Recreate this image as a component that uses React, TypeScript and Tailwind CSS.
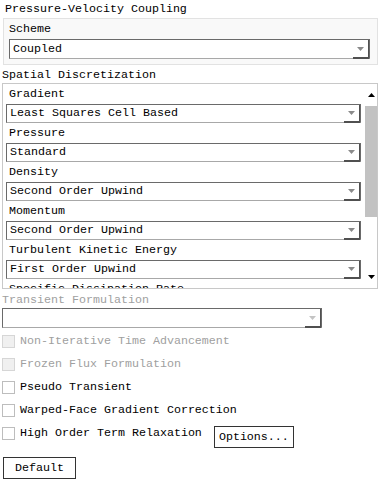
import React from "react";

const font = { fontFamily: '"Liberation Mono", "DejaVu Sans Mono", monospace' };

function Arrow({ color }: { color: string }) {
  return (
    <svg width="7" height="4" viewBox="0 0 7 4" aria-hidden>
      <path d="M0 0H7L3.5 4Z" fill={color} />
    </svg>
  );
}

function Combo({
  value,
  disabled,
  short,
  className = "",
}: {
  value: string;
  disabled?: boolean;
  short?: boolean;
  className?: string;
}) {
  return (
    <div
      className={`flex ${short ? "h-[19px]" : "h-[20px]"} border border-[#6a6a6a] border-b-[#a8a8a8] bg-white ${className}`}
    >
      <span className={`flex-1 overflow-hidden whitespace-nowrap pl-[3px] ${short ? "leading-[17px]" : "leading-[18px]"}`}>
        {value}
      </span>
      <span className="-mb-px flex w-[16px] items-center justify-center border-b-2 border-r border-b-[#505050] border-r-[#505050]">
        <Arrow color={disabled ? "#c4c4c4" : "#8a8a8a"} />
      </span>
    </div>
  );
}

function Field({ label, value }: { label: string; value: string }) {
  return (
    <div>
      <div className="h-[20px] pl-[3px] leading-[21px]">{label}</div>
      <Combo value={value} short />
    </div>
  );
}

function Check({ label, disabled }: { label: string; disabled?: boolean }) {
  return (
    <div className={`flex h-[23px] items-center gap-[5px] pl-[2px] ${disabled ? "text-[#a0a0a0]" : ""}`}>
      <span
        className={`h-[13px] w-[13px] border ${disabled ? "border-[#d6d6d6] bg-[#f0f0f0]" : "border-[#bdbdbd] bg-white"}`}
      />
      <span>{label}</span>
    </div>
  );
}

const fields = [
  ["Gradient", "Least Squares Cell Based"],
  ["Pressure", "Standard"],
  ["Density", "Second Order Upwind"],
  ["Momentum", "Second Order Upwind"],
  ["Turbulent Kinetic Energy", "First Order Upwind"],
  ["Specific Dissipation Rate", "Second Order Upwind"],
];

export default function App() {
  return (
    <div className="h-[483px] w-[384px] overflow-hidden bg-white text-[11.67px] text-black" style={font}>
      <div className="h-[18px] pl-[5px] leading-[18px]">Pressure-Velocity Coupling</div>
      <div className="ml-[3px] h-[47px] w-[375px] border border-[#e2e2e2] bg-[#f9f9f9]">
        <div className="h-[20px] pl-[5px] leading-[20px]">Scheme</div>
        <Combo value="Coupled" className="ml-[5px] mr-[7px]" />
      </div>

      <div className="h-[18px] pl-[2px] leading-[20px]">Spatial Discretization</div>
      <div className="ml-[2px] flex h-[206px] w-[376px] border border-[#c8c8c8] bg-white">
        <div className="flex-1 overflow-hidden pl-[3px] pr-[4px]">
          {fields.map(([l, v]) => (
            <Field key={l} label={l} value={v} />
          ))}
        </div>
        <div className="flex w-[12px] flex-col">
          <div className="flex h-[22px] items-center justify-center">
            <svg width="7" height="4" viewBox="0 0 7 4" aria-hidden>
              <path d="M0 4H7L3.5 0Z" fill="#000" />
            </svg>
          </div>
          <div className="h-[111px] bg-[#c2c2c2]" />
          <div className="flex-1" />
          <div className="flex h-[22px] items-center justify-center">
            <Arrow color="#000" />
          </div>
        </div>
      </div>

      <div className="h-[19px] pl-[2px] leading-[22px] text-[#a0a0a0]">Transient Formulation</div>
      <Combo value="" disabled className="ml-[2px] w-[320px]" />

      <div className="mt-[2px]">
        <Check label="Non-Iterative Time Advancement" disabled />
        <Check label="Frozen Flux Formulation" disabled />
        <Check label="Pseudo Transient" />
        <Check label="Warped-Face Gradient Correction" />
        <div className="flex items-start">
          <Check label="High Order Term Relaxation" />
          <button className="ml-[12px] mt-[4px] h-[22px] w-[80px] border border-[#333] bg-white leading-[20px]">
            Options...
          </button>
        </div>
      </div>

      <button className="ml-[3px] mt-[9px] h-[22px] w-[73px] border border-[#333] bg-white leading-[20px]">
        Default
      </button>
    </div>
  );
}
